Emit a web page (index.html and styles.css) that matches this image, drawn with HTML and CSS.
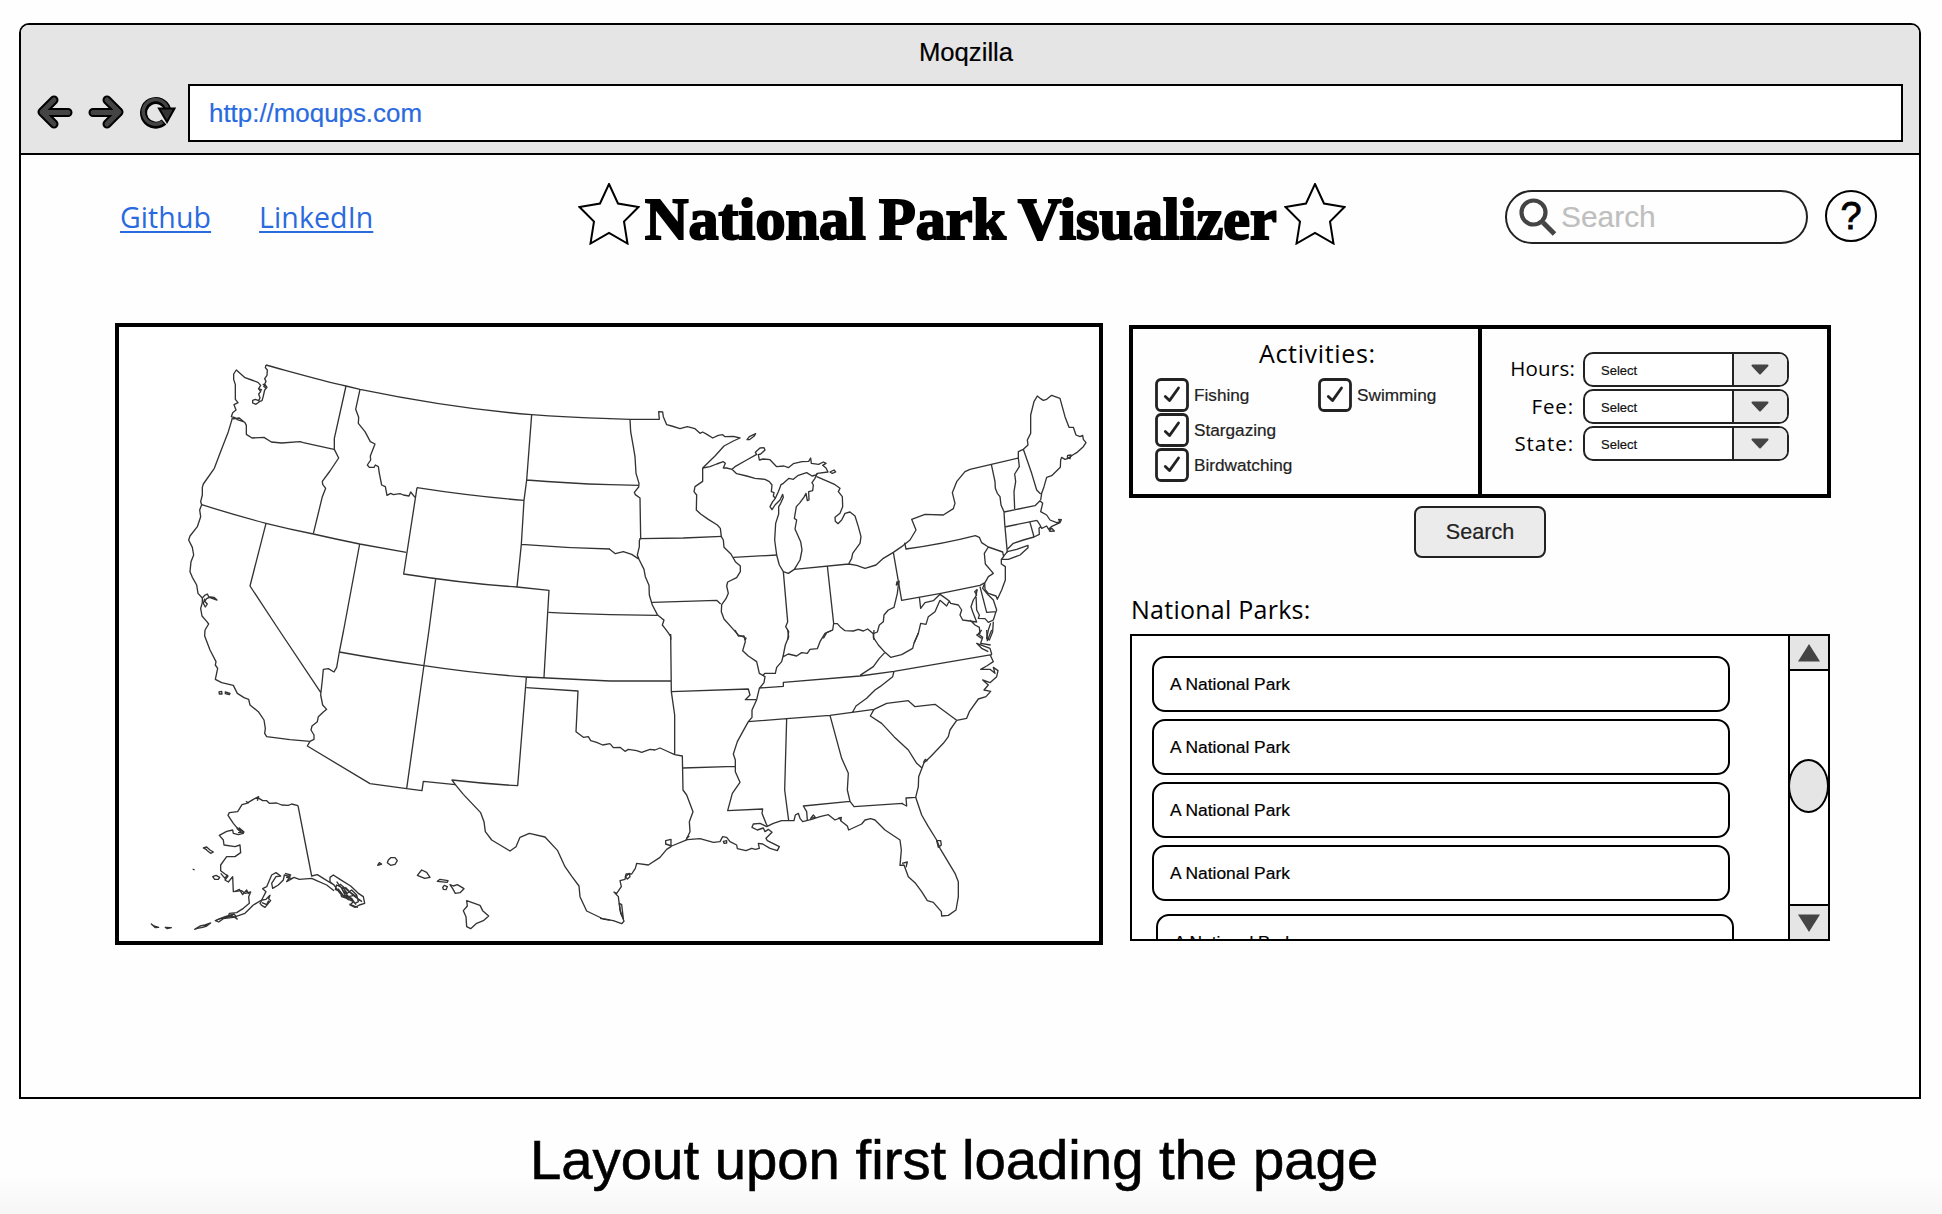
FILE: index.html
```html
<!DOCTYPE html>
<html lang="en">
<head>
<meta charset="utf-8">
<title>National Park Visualizer</title>
<link rel="stylesheet" href="styles.css">
</head>
<body>
<main class="browser">
  <header class="chrome">
    <div class="chrome-title">Moqzilla</div>
    <div class="toolbar">
      <svg class="nav-icons" width="142" height="36" viewBox="0 0 142 36">
        <g fill="none" stroke-linecap="round" stroke-linejoin="round">
          <g stroke="#000" stroke-width="9"><path d="M19 5 7 17 19 29M8 17.500H33"/><path d="M72 5 84 17 72 29M83 17.500H58"/></g>
          <g stroke="#444" stroke-width="5"><path d="M19 5 7 17 19 29M8 17.500H33"/><path d="M72 5 84 17 72 29M83 17.500H58"/></g>
        </g>
        <path d="M129 27A12.300 12.300 0 1 1 132.500 14" fill="none" stroke="#000" stroke-width="7"/>
        <path d="M127.500 27A12.300 12.300 0 1 1 132.500 14" fill="none" stroke="#444" stroke-width="3.500"/>
        <path d="M124 13.500H139.500L132 27Z" fill="#333" stroke="#000" stroke-width="2"/>
      </svg>
      <div class="address">http://moqups.com</div>
    </div>
  </header>

  <section class="page">
    <div class="masthead">
      <nav class="links"><a href="#">Github</a><a href="#">LinkedIn</a></nav>
      <div class="brand">
        <svg class="star" width="62" height="62" viewBox="0 0 62 62"><path d="M31 1 40 20.500 60.500 24 46 38.500 49.500 60.500 31 50 12.500 60.500 16 38.500 1.500 24 22 20.500Z"/></svg>
        <h1>National Park Visualizer</h1>
        <svg class="star" width="62" height="62" viewBox="0 0 62 62"><path d="M31 1 40 20.500 60.500 24 46 38.500 49.500 60.500 31 50 12.500 60.500 16 38.500 1.500 24 22 20.500Z"/></svg>
      </div>
      <div class="tools">
        <div class="search">
          <svg width="38" height="38" viewBox="0 0 38 38" fill="none" stroke="#444"><circle cx="14.500" cy="14.500" r="12" stroke-width="4.200"/><path d="M24 24.500 35.500 36" stroke-width="5"/></svg>
          <span>Search</span>
        </div>
        <div class="help">?</div>
      </div>
    </div>

    <div class="content">
      <div class="map">
        <svg viewBox="27 51 2940 1842" fill="none" stroke="#333" stroke-width="4" stroke-linejoin="round">
          <!-- north-west -->
          <g>
            <path d="M468 165 C560 190 640 213 708 228 L750 238 C930 275 1090 300 1265 314 C1350 321 1430 324 1500 326"/>
            <path d="M468 165 466 173 472 180 471 196 464 206 468 214 464 222 471 232 464 240 459 262 456 272 448 275 438 283 428 279 428 271 436 268 446 272 450 264 446 252 452 245 446 236 452 226 444 217 425 210 405 203 379 180 371 192 371 208 376 224 376 268 384 278 372 284 378 300 368 308 364 320 374 324 M444 236 456 240M458 222 470 230M460 228 470 236"/>
            <path d="M364 327 388 324 405 338 409 346 409 373 426 384 462 382 484 396 515 399 570 395 580 398 672 418 M370 320 382 329 400 335"/>
            <path d="M708 228 L673 385 673 418 686 444 660 483 637 514 638 523 647 535 637 560 610 671"/>
            <path d="M750 238 737 298 746 322 745 340 765 365 781 395 795 402 781 438 782 450 772 465 778 472 792 472 796 465 805 470 808 490 815 525 826 530 831 556 842 550 850 554 870 551 880 555 897 558 902 546 915 562"/>
            <path d="M366 328 355 365 330 430 313 475 280 522 277 532 277 555 272 575 275 584 269 600 272 620 262 650 240 678 236 690 247 712 251 735 243 755 240 785 247 802 260 825 264 850 277 864 277 878 272 895 276 918 290 934 296 942 285 960"/>
            <path d="M277 864 284 856 292 852 296 860 312 862 321 870 298 862 290 866 284 874 292 882 286 891 280 880 284 866"/>
            <path d="M275 584 Q370 614 468 640 Q540 658 610 672 Q680 688 749 702 L889 727"/>
            <path d="M468 640 420 828 507 960M749 702 701 960M921 533 C1030 550 1140 563 1242 571M921 533 881 792 C1010 812 1110 824 1221 831 L1317 841 1310 960M977 807 957 960"/>
            <path d="M1265 314 1250 510 1242 571 1234 703 1221 831M1250 510 Q1370 520 1500 524M1234 703 Q1370 714 1500 717M1315 907 Q1400 911 1500 914"/>
          </g>
          <!-- north-east -->
          <g transform="translate(1470)">
            <path d="M28 326 90 328H178L176 305 188 306 190 320 200 344 215 348 240 356 262 350 285 356 300 370 308 366 322 374 338 384 355 376 368 374 375 380 400 379 420 384 400 393 372 408 345 438 308 474"/>
            <path d="M441 389 448 380 467 371 463 378 448 389Z"/>
            <path d="M90 328 92 365 100 410 105 440 108 490 117 520 116 531 103 547 106 554 120 564 122 684 118 692 118 710 112 735 118 750 132 778 136 800 147 826 148 855 157 885 172 914 185 925 192 930 187 945 195 955 206 970 212 980 212 990M30 524 117 526M28 717 46 731 70 725 95 733 118 748M118 686 250 684 366 679M157 877 350 871 362 882M30 914 172 916"/>
            <path d="M308 474 308 514 285 530 282 545 290 555 289 600 302 612 325 628 352 645 361 655 364 680 370 690 372 712 392 731 398 741 406 755 421 768 421 785 410 803 383 816 380 828 385 850 378 866 365 884 364 905 372 927 400 958 415 975 438 984 436 990M400 742 531 735"/>
            <path d="M308 474 330 470 350 462 370 455 376 460 370 474 380 474 396 478 405 470 440 450 470 433 466 427 480 414 492 413 495 420 482 432 475 434 478 450 490 447 510 449 530 470 552 468 565 473 580 461 606 455 626 454 632 444 634 460 656 463 670 456 678 460 668 466 678 474 684 486 652 490 648 495 636 498 620 488 595 496 580 508 567 505 550 520 543 524 535 545 526 565 520 558 522 548 514 545 516 525 508 515 495 508 465 505 440 498 410 491 396 478"/>
            <path d="M690 486 702 480 707 486 697 490Z"/>
            <path d="M526 565 518 575 510 590 516 599 525 585 540 570 548 553 550 562 542 580 536 590 536 612 527 640 524 690 530 735 538 765 550 785 565 790 583 778 600 750 606 720 602 695 585 657 590 630 583 625 589 590 600 578 613 560 618 550 622 572 627 570 626 545 638 542 640 525 636 518 645 505 652 490M650 500 690 517 705 524 720 535 715 545 727 560 728 590 720 610 705 622 706 634 714 641 725 630 735 610 750 606 765 618 775 650 783 680 780 700 758 730 755 745 746 762M583 778 746 762 770 766 795 775 828 765 850 745 880 727 905 710 930 690 948 660 935 628 975 613 1030 615 1060 596 1065 580 1057 548 1070 515 1095 485 1110 478 1174 463 1255 444 1255 425 1270 418 1284 405 1282 390 1292 370 1292 315 1302 275 1312 258 1322 266 1330 271 1340 268 1355 256 1380 265 1395 320 1407 352 1420 352 1428 375 1440 380 1448 376 1450 388 1458 398 1450 410 1430 428 1418 435 1405 445 1395 448 1385 442 1382 450 1381 472 1355 497 1340 502 1332 530 1325 550 1322 570"/>
            <path d="M1403 436 1413 435 1410 446 1402 442ZM1270 418 1295 490 1310 540 1322 552M1174 463 1185 515 1186 535 1192 550 1200 560 1203 585 1212 605 1214 640 1222 728M1255 444 1258 470 1244 492 1247 515 1242 545 1244 597M1212 606 1305 587 1320 572 1328 580 1322 605 1340 615 1350 630 1370 638 1380 636 1376 628 1384 629 1380 638 1354 650 1346 658 1340 648 1325 655 1320 645 1311 631M1214 651 1311 631M1348 662 1355 655 1363 663 1350 664ZM1290 637 1302 681 1318 673 1317 655 1322 650"/>
            <path d="M1222 718 1240 700 1270 690 1302 681M1210 740 1222 725 1250 718 1284 706 1284 713 1260 735 1225 748 1204 748 1212 738M880 727 905 871 Q1020 852 1140 826M914 698 918 717 Q1030 702 1126 677 L1138 682 1145 698 1165 711 1208 726 1211 740M1165 711 1153 730 1156 762 1180 790 1165 800 1155 818 1140 826M1204 748 1204 762 1216 770 1216 810 1205 840 1192 868 1188 858 1165 850 1155 838 1154 820"/>
            <path d="M550 785 563 935 557 950 566 965 563 990M682 768 701 940 698 960 680 968 670 985M701 940 712 941 720 950 735 962 760 963 775 958 790 963 803 957 820 971 832 966 838 945 850 935 852 915 865 900 882 892 892 850 895 825 898 812M891 815 895 820 889 825Z"/>
            <path d="M820 971 822 990M958 861 962 895 975 878 1000 872 1020 853 1030 860 1048 873 1052 880 1075 885 1085 900 1080 915 1088 930 1130 936 1118 905 1113 890 1120 870 1130 855 1124 845 1132 838M1048 873 1040 888 1020 871 1005 905 985 920 978 943 962 940 955 970 942 1000M1132 838 1128 855 1130 900 1138 915 1135 925 1155 926 1165 937 1180 930 1188 905 1160 907 1140 830M1154 820 1148 835 1165 855 1180 870 1190 900 1188 905M1110 930 1125 945 1138 952 1140 970 1130 975 1145 985M1180 935 1178 965 1168 990 1160 985 1165 960 1172 940"/>
          </g>
          <!-- south-west, Alaska and Hawaii -->
          <g transform="translate(0 960)">
            <path d="M285 0 284 18 300 60 318 95 316 105 323 115 316 148 335 158 370 166 382 190 402 203 416 208 420 225 445 245 462 270 466 295 464 310 470 320 540 329 600 334 612 328 612 315 603 300 606 288 622 275 625 260 640 246 650 238 638 225 632 195 637 150 640 118 655 116 672 126 680 112 688 66 701 0M507 0 632 187M600 334 592 348 780 461 890 476 936 482 940 454 1036 464 1026 450 Q1130 462 1223 467 L1249 142M957 0 942 105 890 476M688 66 Q820 90 942 107 Q1100 131 1250 141 L1500 153M1310 0 1302 142M1249 173 1404 183 1398 305 1420 322 1435 320 1442 332 1460 337 1478 345 1500 341"/>
            <path d="M1036 464 1060 493 1112 548 1122 575 1126 605 1145 630 1200 663 1218 650 1230 622 1258 610 1305 621 1343 662 1365 710 1386 740 1407 768 1410 800 1430 843 1480 867 1500 870"/>
            <path d="M327 186 335 184 336 192 328 192ZM346 186 360 190 358 194 346 191Z"/>
            <path d="M564 527 545 522 535 526 515 525 500 519 478 520 470 512 458 512 442 502 430 508 410 520 396 524 383 545 358 548 354 556 370 580 380 592 390 600 398 604 400 610 385 614 370 610 368 600 350 604 328 616 340 630 342 645 375 650 390 645 392 668 375 680 350 680 332 705 332 722 345 732 354 738 345 750 355 756 368 740 370 785 395 782 405 790 422 786 416 800 418 820 400 835 380 848 358 850 355 860 330 866 316 872 326 876 340 866 370 862 405 850 430 825 455 810 468 785 458 776 470 770 485 735 498 728 512 738 498 740 485 760 488 775 505 765 520 750 523 735 540 740 530 755 552 742 568 748 605 745 620 752 650 765 672 782"/>
            <path d="M564 527 605 738 622 734 640 745 672 765 660 755 660 742 670 735 690 748 722 768 745 790 760 800 764 820 748 825 735 832 720 825 730 815 710 805 695 800 690 785 676 778 680 765 700 775 712 790 725 780 740 795 745 815 735 820 725 805 705 795 695 775 680 755M672 765 690 790 716 810M690 762 735 800 756 815M718 822 742 832 728 828M684 776 700 796 722 806 738 824M700 782 716 800 732 796 750 812M706 772 722 788 742 802"/>
            <path d="M380 595 392 606 388 594 402 606 384 608M280 654 290 651 300 660 310 666 302 670 292 662 288 658ZM308 740 318 736 329 742 325 748 314 748ZM248 717 254 720M450 820 456 810 468 808 480 796 476 806 482 812 475 820 465 832 455 826ZM456 818 470 824 476 812M124 882 132 888 146 892 136 893ZM166 892 184 893 172 896ZM254 898 270 888 285 885 302 879 290 888 278 892 262 895ZM320 870 345 860 372 852 380 862M345 862 368 858 383 868M437 506 446 500 442 512M408 514 416 520M525 730 542 735 530 742 546 746M332 730 345 745 352 734M375 785 388 778 398 794 410 780 416 792"/>
            <path d="M803 706 808 698 815 702ZM835 690 842 683 855 683 862 692 855 703 842 706 832 698ZM922 736 935 720 950 727 960 742 944 745ZM982 754 990 748 1014 752 1012 757ZM998 772 1003 766 1012 770 1008 779 1000 778ZM1020 764 1030 768 1042 764 1062 776 1050 788 1036 790 1028 776ZM1060 842 1072 828 1070 812 1110 826 1118 842 1136 858 1120 872 1100 880 1082 896 1070 890 1068 860Z"/>
          </g>
          <!-- south-east -->
          <g transform="translate(1470 960)">
            <path d="M212 12 214 185 224 255 224 374 247 378 249 480 260 495 279 545 268 575 270 605 258 630M30 153 212 153M214 185 445 177 450 195 436 209 468 209M30 341 40 353 60 352 75 364 85 358 110 362 125 367 150 358 165 360 180 354 200 363 224 374M248 414 405 409M405 0 415 18 432 18 436 35 428 62 445 78 470 95 478 130 495 140 492 158 478 175 470 209 456 240 456 262 445 275 430 302 412 335 400 372 406 390 406 425 420 457 397 490 383 542 488 537 486 550 498 580 502 588"/>
            <path d="M563 0 566 20 556 45 550 75 545 95 530 112 526 130 495 130 488 137M550 80 565 72 590 78 605 68 622 70 630 58 652 56 660 35 675 10 698 0M822 0 820 22 835 45 855 67 872 82 905 74 938 55 942 40 955 10M855 67 838 85 820 110 780 136M478 174 550 169 550 157 780 138 882 124 1175 74M445 275 560 266 690 256 822 238 860 220 925 212 945 230 1005 223 1070 271 1100 265 1108 245 1135 207 1158 200 1172 184 1152 180 1165 165 1148 150 1170 158 1190 140 1194 122 1180 112 1185 130 1170 118 1142 118 1160 108 1180 95 1172 78 1175 72 1170 55 1130 40 1145 55 1165 65M882 124 878 140 840 170 825 180 800 205 768 228 758 246M822 238 811 258 845 280 882 320 925 360 950 400 966 414 972 398 990 382 1030 340 1045 320 1050 300 1070 271M966 414 956 440 955 470 947 502 918 504 920 528 908 522 908 520 762 530 750 514 742 480 745 430 725 385 690 256M560 266 554 480 566 572M750 514 610 528 620 545 622 570M1145 0 1135 12 1148 22 1142 40 1172 45M1160 0 1162 32 1175 0"/>
            <path d="M947 502 965 555 985 590 1010 630 1020 655 1065 730 1075 755 1075 800 1068 840 1045 856 1025 858 1024 845 1000 817 982 812 965 785 945 758 925 740 912 705 900 706 904 660 900 630 855 600 825 570 812 566 795 570 785 582 746 600 742 588 722 572 724 562 705 570 685 554 660 560 635 568 608 575 600 565 595 550 586 555 582 572 545 572 520 580 500 590 480 580 460 582 456 592 472 600 490 594 495 605 505 598 516 607 498 625 502 632 538 650 532 662 510 655 488 642 475 640 478 655 466 658 455 655 438 662 412 656 410 645 390 635 380 622 368 620 360 635 340 637 300 626 262 629 215 648 197 642 197 632 213 628 213 650 200 658 180 682 145 705 110 700 106 715 95 732 78 732 75 748 60 752 64 770 50 790 42 786 55 800 60 840 72 874 65 881 40 872 0 865"/>
            <path d="M76 740 88 730 90 740 82 747ZM58 820 65 824 70 866 62 850ZM370 634 380 632 380 639 372 640ZM632 565 640 555 646 562ZM716 562 724 572M906 700 922 696 918 712M1010 632 1022 632 1024 645 1015 652ZM970 398 976 388 982 394M260 625 268 618"/>
          </g>
        </svg>
      </div>

      <div class="side">
        <div class="filters">
          <div class="box activities">
            <h2>Activities:</h2>
            <div class="checks">
              <label><svg class="tick" viewBox="0 0 34 34"><rect x="1.500" y="1.500" width="31" height="31" rx="4.500"/><path d="M10.300 18.500 14.500 22.600 23.500 10"/></svg>Fishing</label>
              <label><svg class="tick" viewBox="0 0 34 34"><rect x="1.500" y="1.500" width="31" height="31" rx="4.500"/><path d="M10.300 18.500 14.500 22.600 23.500 10"/></svg>Swimming</label>
              <label><svg class="tick" viewBox="0 0 34 34"><rect x="1.500" y="1.500" width="31" height="31" rx="4.500"/><path d="M10.300 18.500 14.500 22.600 23.500 10"/></svg>Stargazing</label>
              <span></span>
              <label><svg class="tick" viewBox="0 0 34 34"><rect x="1.500" y="1.500" width="31" height="31" rx="4.500"/><path d="M10.300 18.500 14.500 22.600 23.500 10"/></svg>Birdwatching</label>
            </div>
          </div>
          <div class="box selects">
            <div class="field"><span class="name">Hours:</span><div class="select"><span>Select</span><i><svg width="18" height="11" viewBox="0 0 18 11"><path d="M1.500 1.500H16.500L9 9.500Z"/></svg></i></div></div>
            <div class="field"><span class="name fee">Fee:</span><div class="select"><span>Select</span><i><svg width="18" height="11" viewBox="0 0 18 11"><path d="M1.500 1.500H16.500L9 9.500Z"/></svg></i></div></div>
            <div class="field"><span class="name state">State:</span><div class="select"><span>Select</span><i><svg width="18" height="11" viewBox="0 0 18 11"><path d="M1.500 1.500H16.500L9 9.500Z"/></svg></i></div></div>
          </div>
        </div>
        <button class="go">Search</button>
        <h2 class="list-title">National Parks:</h2>
        <div class="list">
          <div class="items">
            <div class="item">A National Park</div>
            <div class="item">A National Park</div>
            <div class="item">A National Park</div>
            <div class="item">A National Park</div>
            <div class="item last">A National Park</div>
          </div>
          <div class="scroll">
            <div class="step"><svg width="22" height="18" viewBox="0 0 22 18"><path d="M11 0 22 17.500H0Z"/></svg></div>
            <div class="track"><div class="thumb"></div></div>
            <div class="step"><svg width="22" height="18" viewBox="0 0 22 18"><path d="M0 .5H22L11 18Z"/></svg></div>
          </div>
        </div>
      </div>
    </div>
  </section>
</main>
<p class="caption">Layout upon first loading the page</p>
</body>
</html>
```
FILE: styles.css
```css
* { box-sizing: border-box; }
body {
  margin: 0;
  height: 1214px;
  overflow: hidden;
  background: linear-gradient(#fefefe 1175px, #f6f6f6 1214px);
  color: #000;
  font-family: "Liberation Sans", Arial, sans-serif;
  -webkit-text-stroke: .2px currentColor;
}
h1, h2, p { margin: 0; font-weight: 400; }
svg { display: block; flex: none; }

.browser {
  width: 1902px;
  height: 1076px;
  margin: 23px 0 0 19px;
  border: 2px solid #000;
  border-radius: 10px 10px 0 0;
  overflow: hidden;
}
.chrome { height: 130px; background: #e5e5e5; border-bottom: 2px solid #000; }
.chrome-title { height: 59px; padding: 12px 8px 0 0; font-size: 25.7px; line-height: 30px; text-align: center; }
.toolbar { display: flex; align-items: center; padding-right: 16px; }
.nav-icons { margin-left: 14px; }
.address {
  flex: 1;
  height: 58px;
  margin-left: 11px;
  padding-left: 19px;
  border: 2px solid #000;
  background: #fff;
  color: #2a6adf;
  font-size: 25.9px;
  line-height: 54px;
}

.masthead { display: flex; height: 122px; padding: 28px 42px 0 99px; }
.links { display: flex; gap: 48px; width: 458px; padding-top: 17px; }
.links a {
  color: #2a6adf;
  font: 28.5px/34px "Open Sans", sans-serif;
  letter-spacing: .1px;
  text-decoration-thickness: 2px;
  text-underline-offset: 3px;
  -webkit-text-stroke: 0;
}
.brand { display: flex; }
.star { fill: none; stroke: #000; stroke-width: 2; }
h1 {
  width: 644px;
  height: 62px;
  padding-left: 5px;
  font: bold 60px/72px "Liberation Serif", serif;
  letter-spacing: .1px;
  word-spacing: -2px;
  white-space: nowrap;
  -webkit-text-stroke: 2.2px #000;
}
.tools { display: flex; margin-left: auto; gap: 17px; padding-top: 7px; }
.search {
  display: flex;
  align-items: center;
  gap: 4px;
  width: 303px;
  height: 54px;
  padding-left: 12px;
  border: 2px solid #222;
  border-radius: 27px;
  color: #bfbfbf;
  font-size: 29.9px;
}
.help {
  width: 52px;
  height: 52px;
  border: 2px solid #000;
  border-radius: 50%;
  font-size: 38px;
  line-height: 48px;
  text-align: center;
  -webkit-text-stroke: .8px #000;
}

.content { display: flex; gap: 26px; padding: 46px 0 0 94px; }
.map { width: 988px; height: 622px; border: 4px solid #000; background: #fff; }
.map svg { width: 980px; height: 614px; }

.side { display: flex; flex-direction: column; width: 702px; padding-top: 2px; }
.filters { display: flex; }
.box { width: 353px; height: 173px; border: 4px solid #000; }
.box + .box { margin-left: -4px; }
h2 { font: 25px/34px "Open Sans", sans-serif; -webkit-text-stroke: 0; }
.activities h2 { padding: 7px 0 0 126px; letter-spacing: .65px; }
.checks {
  display: grid;
  grid-template-columns: 163px auto;
  grid-auto-rows: 35px;
  padding: 8px 0 0 22px;
}
.checks label { display: flex; align-items: flex-start; gap: 5px; color: #222; font-size: 17.2px; line-height: 34px; }
.tick { width: 34px; height: 34px; fill: none; stroke: #222; stroke-width: 2.800; stroke-linecap: round; stroke-linejoin: round; }
.selects { display: flex; flex-direction: column; gap: 2px; padding: 23px 0 0 20px; }
.field { display: flex; height: 35px; }
.name { width: 73px; margin-right: 8px; text-align: right; font: 20.5px/32px "Open Sans", sans-serif; letter-spacing: .2px; -webkit-text-stroke: 0; }
.fee { padding-right: 1px; line-height: 35px; letter-spacing: .9px; }
.state { padding-right: 1px; line-height: 34px; letter-spacing: .9px; }
.select {
  display: flex;
  width: 206px;
  border: 2px solid #222;
  border-radius: 10px;
  overflow: hidden;
  background: #fff;
  color: #111;
  font-size: 13px;
  line-height: 33px;
}
.select span { flex: 1; padding-left: 16px; }
.select i { display: flex; align-items: center; justify-content: center; width: 55px; padding-right: 1px; border-left: 2px solid #222; background: #ebebeb; }
.select path { fill: #444; stroke: #444; stroke-width: 2; stroke-linejoin: round; }
.go {
  width: 132px;
  height: 52px;
  margin: 8px 0 0 285px;
  padding: 0;
  border: 2px solid #222;
  border-radius: 8px;
  background: #ebebeb;
  color: #222;
  font: 21.6px "Liberation Sans", Arial, sans-serif;
}
.list-title { margin: 34px 0 0 2px; height: 42px; letter-spacing: .25px; }
.list { display: flex; width: 700px; height: 307px; margin-left: 1px; border: 2px solid #000; background: #fff; }
.items { flex: 1; padding: 20px 0 0 20px; overflow: hidden; }
.item {
  width: 578px;
  height: 56px;
  margin-bottom: 6.900px;
  padding-left: 16px;
  border: 2px solid #000;
  border-radius: 13px;
  font-size: 17.4px;
  line-height: 53px;
}
.last { margin: 13px 0 0 4px; }
.scroll { display: flex; flex-direction: column; width: 40px; border-left: 2px solid #000; }
.step { display: flex; align-items: center; justify-content: center; height: 33px; background: #e5e5e5; }
.step path { fill: #444; }
.track { flex: 1; padding-top: 88px; border: solid #000; border-width: 2px 0; }
.thumb { width: 41px; height: 54px; margin-left: -2px; border: 2px solid #000; border-radius: 50%; background: #e5e5e5; }

.caption { margin: 29px 0 0 530px; font-size: 56.300px; line-height: 64px; white-space: nowrap; -webkit-text-stroke: .6px #000; }
```
